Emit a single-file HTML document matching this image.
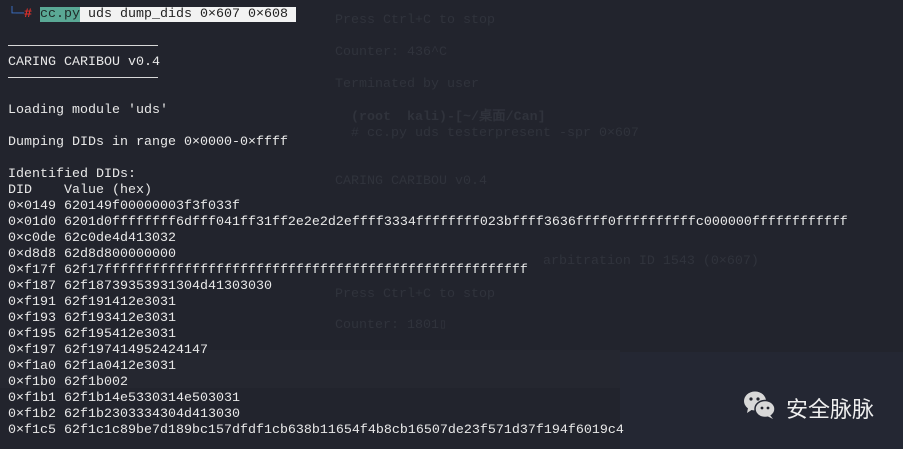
<!DOCTYPE html>
<html><head><meta charset="utf-8"><style>
html,body{margin:0;padding:0;}
body{width:903px;height:449px;overflow:hidden;background:#22242d;position:relative;font-family:"Liberation Mono",monospace;font-size:13.33px;}
.l{position:absolute;left:8px;white-space:pre;color:#e8e8e8;line-height:16px;}
.g{position:absolute;white-space:pre;color:#30333c;line-height:16px;}
.rule{position:absolute;left:8px;width:150px;height:1px;background:#d8d8d8;}
</style></head><body>
<div style="position:absolute;left:0;top:350px;width:620px;height:38px;background:#252730;"></div>
<div style="position:absolute;left:620px;top:352px;width:283px;height:97px;background:#242733;"></div>
<div class="g" style="left:335px;top:13px">Press Ctrl+C to stop</div>
<div class="g" style="left:335px;top:45px">Counter: 436^C</div>
<div class="g" style="left:335px;top:77px">Terminated by user</div>
<div class="g" style="left:335px;top:110px;font-weight:bold">  (root  kali)-[~/桌面/Can]</div>
<div class="g" style="left:335px;top:126px">  # cc.py uds testerpresent -spr 0×607</div>
<div class="g" style="left:335px;top:174px">CARING CARIBOU v0.4</div>
<div class="g" style="left:335px;top:254px">                          arbitration ID 1543 (0×607)</div>
<div class="g" style="left:335px;top:287px">Press Ctrl+C to stop</div>
<div class="g" style="left:335px;top:318px">Counter: 1801▯</div>

<div class="l" style="top:7px;"><span style="color:#3b6fc4">└─</span><span style="color:#e0302c;font-weight:bold">#</span> <span style="background:#5aa895;color:#1f2a28">cc.py</span><span style="background:#f2f2f2;color:#222"> uds dump_dids 0×607 0×608 </span></div>
<div class="rule" style="top:45px"></div>
<div class="l" style="top:55px">CARING CARIBOU v0.4</div>
<div class="rule" style="top:77px"></div>
<div class="l" style="top:103px">Loading module 'uds'</div>
<div class="l" style="top:135px">Dumping DIDs in range 0×0000-0×ffff</div>
<div class="l" style="top:167px">Identified DIDs:
DID    Value (hex)
0×0149 620149f00000003f3f033f
0×01d0 6201d0ffffffff6dfff041ff31ff2e2e2d2effff3334ffffffff023bffff3636ffff0ffffffffffc000000ffffffffffff
0×c0de 62c0de4d413032
0×d8d8 62d8d800000000
0×f17f 62f17fffffffffffffffffffffffffffffffffffffffffffffffffffff
0×f187 62f18739353931304d41303030
0×f191 62f191412e3031
0×f193 62f193412e3031
0×f195 62f195412e3031
0×f197 62f197414952424147
0×f1a0 62f1a0412e3031
0×f1b0 62f1b002
0×f1b1 62f1b14e5330314e503031
0×f1b2 62f1b2303334304d413030
0×f1c5 62f1c1c89be7d189bc157dfdf1cb638b11654f4b8cb16507de23f571d37f194f6019c4</div>

<svg style="position:absolute;left:743px;top:390px" width="34" height="30" viewBox="0 0 34 30">
<ellipse cx="12" cy="11" rx="11" ry="9.5" fill="#d8d8d8"/>
<path d="M5 18 L4 23 L10 19Z" fill="#d8d8d8"/>
<circle cx="8" cy="9" r="1.6" fill="#22242d"/><circle cx="15" cy="9" r="1.6" fill="#22242d"/>
<ellipse cx="22" cy="19" rx="10" ry="8.5" stroke="#242733" stroke-width="1.5" fill="#d8d8d8"/>
<path d="M27 25 L30 29 L24 26Z" fill="#d8d8d8"/>
<circle cx="19" cy="18" r="1.4" fill="#22242d"/><circle cx="25" cy="18" r="1.4" fill="#22242d"/>
</svg>
<div style="position:absolute;left:786px;top:394px;font-family:'Noto Sans CJK SC',sans-serif;font-size:22px;line-height:28px;color:#eeeeee;">安全脉脉</div>
</body></html>
